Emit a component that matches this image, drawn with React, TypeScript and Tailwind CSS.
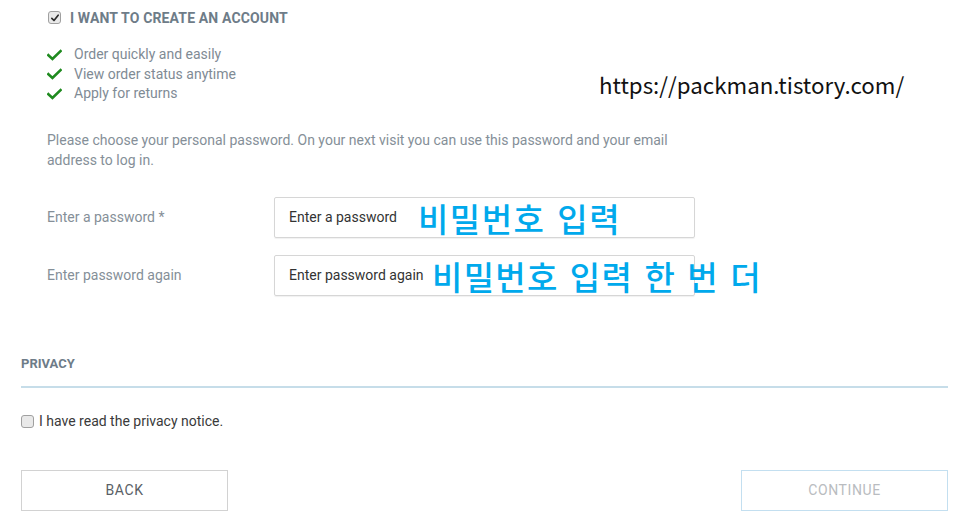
import React from "react";

function Box({ checked }: { checked?: boolean }) {
  return (
    <span className="relative inline-flex h-[13px] w-[13px] shrink-0 items-center justify-center rounded-[3px] border border-[#a0a0a0] bg-[#e9e9e9]">
      {checked && (
        <svg viewBox="0 0 12 12" className="h-[10px] w-[10px]">
          <path d="M2.2 6.4 L4.8 9 L9.8 2.6" fill="none" stroke="#2b2b2b" strokeWidth="2" strokeLinecap="round" strokeLinejoin="round" />
        </svg>
      )}
    </span>
  );
}

function GreenCheck() {
  return (
    <svg viewBox="0 0 16 12" className="h-[12px] w-[15px] shrink-0">
      <path d="M1.5 6.2 L5.8 10.2 L14.5 1.8" fill="none" stroke="#1f8a1f" strokeWidth="2.8" strokeLinecap="square" />
    </svg>
  );
}

export default function App() {
  return (
    <div className="relative h-[515px] w-[956px] overflow-hidden bg-white font-['Roboto',sans-serif] text-[14px]">
      <div className="pl-[47px] pt-[8px]">
        <div className="flex h-[20px] items-center">
          <span className="ml-[1px]"><Box checked /></span>
          <span className="ml-[9px] text-[14px] font-bold tracking-[0.15px] text-[#6e7c88]">I WANT TO CREATE AN ACCOUNT</span>
        </div>
        <ul className="mt-[17px] leading-[19.5px] text-[#7f8b95]">
          {["Order quickly and easily", "View order status anytime", "Apply for returns"].map((t) => (
            <li key={t} className="flex items-center">
              <GreenCheck />
              <span className="ml-[12px]">{t}</span>
            </li>
          ))}
        </ul>
        <p className="mt-[26px] w-[640px] text-[14px] leading-[20px] text-[#858f98]">
          Please choose your personal password. On your next visit you can use this password and your email address to log in.
        </p>
        <div className="mt-[27px] flex flex-col gap-[17px]">
          <div className="flex items-center">
            <span className="w-[227px] text-[#858f98]">Enter a password *</span>
            <div className="relative flex h-[41px] w-[421px] items-center rounded-[2px] border border-[#d6d6d6] pl-[14px] text-[#333333] shadow-[0_1px_1px_rgba(0,0,0,0.06)]">
              Enter a password
              <span className="absolute left-[143px] top-[0px] whitespace-nowrap font-['Noto_Sans_CJK_KR',sans-serif] text-[33px] font-medium leading-[40px] tracking-[1.5px] [word-spacing:3px] text-[#00a9ec]">비밀번호 입력</span>
            </div>
          </div>
          <div className="flex items-center">
            <span className="w-[227px] text-[#858f98]">Enter password again</span>
            <div className="relative flex h-[41px] w-[421px] items-center rounded-[2px] border border-[#d6d6d6] pl-[14px] text-[#333333] shadow-[0_1px_1px_rgba(0,0,0,0.06)]">
              Enter password again
              <span className="absolute left-[157px] top-[0px] whitespace-nowrap font-['Noto_Sans_CJK_KR',sans-serif] text-[33px] font-medium leading-[40px] tracking-[1.3px] [word-spacing:2.5px] text-[#00a9ec]">비밀번호 입력 한 번 더</span>
            </div>
          </div>
        </div>
      </div>

      <div className="pl-[21px] pr-[8px]">
        <div className="mt-[58px] h-[20px] text-[13px] font-bold leading-[20px] text-[#6e7c88]">PRIVACY</div>
        <div className="mt-[12px] h-[2px] bg-[#c6dde9]" />
        <label className="mt-[24px] flex h-[20px] items-center">
          <Box />
          <span className="ml-[5px] text-[#3a3a3a]">I have read the privacy notice.</span>
        </label>
        <div className="mt-[38px] flex justify-between">
          <button className="flex h-[41px] w-[207px] items-center justify-center border border-[#d2d2d2] text-[14px] tracking-[0.6px] text-[#5a5f66]">BACK</button>
          <button className="flex h-[41px] w-[207px] items-center justify-center border border-[#c3dff0] text-[14px] tracking-[0.6px] text-[#b9bcc0]">CONTINUE</button>
        </div>
      </div>

      <div className="absolute left-[599px] top-[68px] font-['Noto_Sans_CJK_KR',sans-serif] text-[22.3px] leading-[32px] text-[#111111]">https://packman.tistory.com/</div>
    </div>
  );
}
